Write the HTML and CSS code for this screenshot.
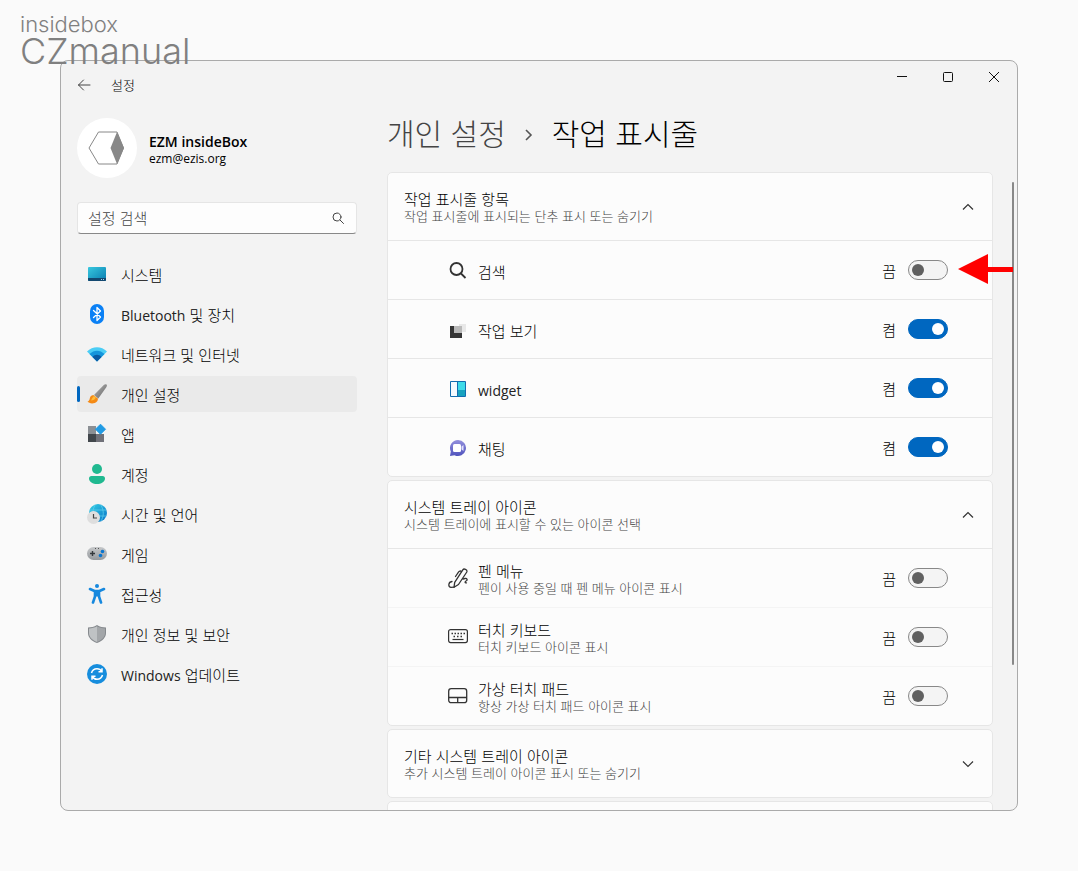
FILE: index.html
```html
<!DOCTYPE html>
<html lang="ko">
<head>
    <meta charset="UTF-8">
    <meta name="viewport" content="width=device-width, initial-scale=1.0">
    <title>설정 - 작업 표시줄</title>
    <link rel="stylesheet" href="styles.css">
</head>
<body>
    <div class="watermark">
        <span class="watermark-small">insidebox</span>
        <span class="watermark-large">CZmanual</span>
    </div>
    <div class="window">
        <header class="titlebar">
            <button class="back" aria-label="뒤로">
                <svg width="14" height="14" viewBox="0 0 14 14" fill="none" stroke="#444" stroke-linecap="round" stroke-linejoin="round"><path d="M13 7H1.5M6.5 2L1.5 7l5 5"/></svg>
            </button>
            <span class="app-title">설정</span>
            <div class="window-controls">
                <button aria-label="최소화"><svg width="12" height="12" viewBox="0 0 12 12" stroke="#111"><path d="M1 5.5h10"/></svg></button>
                <button aria-label="최대화"><svg width="12" height="12" viewBox="0 0 12 12" fill="none" stroke="#111"><rect x="1.5" y="1.5" width="9" height="9" rx="1"/></svg></button>
                <button aria-label="닫기"><svg width="12" height="12" viewBox="0 0 12 12" stroke="#111"><path d="M1 1l10 10M11 1L1 11"/></svg></button>
            </div>
        </header>
        <div class="body">
            <aside class="sidebar">
                <div class="profile">
                    <div class="avatar">
                        <svg width="38" height="34" viewBox="0 0 38 34"><path d="M10.500 1H29l6.500 16L29 33H10.500L1 17z" fill="none" stroke="#888"/><path d="M29 1l7 16-7 16-6.500-16z" fill="#888"/></svg>
                    </div>
                    <div class="profile-text">
                        <div class="profile-name">EZM insideBox</div>
                        <div class="profile-mail">ezm@ezis.org</div>
                    </div>
                </div>
                <div class="search">
                    <input type="text" id="search" aria-label="설정 검색" placeholder="설정 검색">
                    <svg width="12" height="12" viewBox="0 0 12 12" fill="none" stroke="#444" stroke-linecap="round"><circle cx="5" cy="5" r="4"/><path d="M8 8l3.500 3.500"/></svg>
                </div>
                <nav>
                    <a href="#system">
                        <svg width="20" height="20" viewBox="0 0 20 20"><defs><linearGradient id="sys" x2="1" y2="1"><stop stop-color="#38c8df"/><stop offset="1" stop-color="#087cb0"/></linearGradient></defs><rect x="1" y="3" width="18" height="14" rx="1" fill="url(#sys)"/><path d="M1 14h18v2a1 1 0 0 1-1 1H2a1 1 0 0 1-1-1z" fill="#134870"/><path d="M14 15.500h1M16 15.500h1" stroke="#9fd8f0"/></svg>
                        <span class="nav-label">시스템</span>
                    </a>
                    <a href="#bluetooth">
                        <svg width="20" height="20" viewBox="0 0 20 20"><rect x="3" width="14" height="20" rx="7" fill="#0a80f5"/><path d="M6.500 6.500l7 6.500-3.500 3.500V3.500L13.500 7l-7 6.500" fill="none" stroke="#fff" stroke-width="1.300" stroke-linejoin="round" stroke-linecap="round"/></svg>
                        <span class="nav-label"><span class="latin">Bluetooth</span> 및 장치</span>
                    </a>
                    <a href="#network">
                        <svg width="20" height="20" viewBox="0 0 20 20"><path d="M0 7.500C5.500 1.800 14.500 1.800 20 7.500L10 17.500z" fill="#4bcdf5"/><path d="M2.500 10C7 5.500 13 5.500 17.500 10L10 17.500z" fill="#1595dc"/><path d="M5.500 13C8 10 12 10 14.500 13L10 17.500z" fill="#0a5ba4"/></svg>
                        <span class="nav-label">네트워크 및 인터넷</span>
                    </a>
                    <a href="#personalization" class="active">
                        <svg width="20" height="20" viewBox="0 0 20 20"><defs><linearGradient id="brush" x2="1" y2="1"><stop stop-color="#b5b5b5"/><stop offset="1" stop-color="#666"/></linearGradient></defs><path d="M19.500.5c.7.7.5 1.800-.2 2.800l-8 11.200L7 11 16.800 1C17.700.1 18.900-.1 19.500.5z" fill="url(#brush)"/><path d="M6.300 11c-2.500.2-3.300 1.800-3.600 3.800-.2 1.500-1 2.500-2.200 2.800 1.300 1.700 4.700 2.300 7.200 1.300 2.200-.8 3.400-2.600 3.200-4.500z" fill="#f58a15"/><path d="M7 12c-1.500 1-2 3-3 4.500 2 0 4.500-1 4.800-3.300z" fill="#ffbd38"/></svg>
                        <span class="nav-label">개인 설정</span>
                    </a>
                    <a href="#apps">
                        <svg width="20" height="20" viewBox="0 0 20 20"><path d="M1 2h8v8H1z" fill="#8b8f94"/><path d="M1 10h8v8H1z" fill="#42474c"/><path d="M9 10h8v8H9z" fill="#707179"/><path d="M13.500.2l5 5-5 5-5-5z" fill="#219be4" stroke="#219be4" stroke-linejoin="round"/></svg>
                        <span class="nav-label">앱</span>
                    </a>
                    <a href="#accounts">
                        <svg width="20" height="20" viewBox="0 0 20 20" fill="#20b990"><circle cx="10" cy="5" r="5"/><path d="M4.500 12h11A2.500 2.500 0 0 1 18 14.500C18 18 14 20 10 20s-8-2-8-5.500A2.500 2.500 0 0 1 4.500 12z"/></svg>
                        <span class="nav-label">계정</span>
                    </a>
                    <a href="#time">
                        <svg width="20" height="20" viewBox="0 0 20 20"><defs><linearGradient id="globe" x2="1" y2="1"><stop stop-color="#35d0e4"/><stop offset="1" stop-color="#0873c8"/></linearGradient></defs><circle cx="11" cy="9" r="9" fill="url(#globe)"/><path d="M3 6h16M3 12h16M8 1c-3 6-3 11 0 16M14 1c3 6 3 11 0 16" fill="none" stroke="#63d2ef" stroke-width=".7"/><circle cx="6.500" cy="13.500" r="6.500" fill="#dedede"/><path d="M6.500 10v4h3.500" fill="none" stroke="#444" stroke-width="1.200"/></svg>
                        <span class="nav-label">시간 및 언어</span>
                    </a>
                    <a href="#gaming">
                        <svg width="20" height="20" viewBox="0 0 20 20"><defs><linearGradient id="pad" x2="0" y2="1"><stop stop-color="#c6c8ca"/><stop offset="1" stop-color="#95999d"/></linearGradient></defs><rect y="3" width="20" height="13" rx="6.500" fill="url(#pad)"/><path d="M5.500 7v5M3 9.500h5" stroke="#35393d" stroke-width="1.400"/><path d="M8 4.500h1M11 4.500h1" stroke="#555"/><circle cx="15.500" cy="7.500" r="1.800" fill="#0875d0"/><circle cx="13.500" cy="11.500" r="1.800" fill="#0875d0"/></svg>
                        <span class="nav-label">게임</span>
                    </a>
                    <a href="#accessibility">
                        <svg width="20" height="20" viewBox="0 0 20 20" fill="none" stroke="#1688de" stroke-width="2.600" stroke-linecap="round" stroke-linejoin="round"><circle cx="10" cy="2" r="2" fill="#1688de" stroke="none"/><path d="M3 5l4.500 2h5L17 5M8 7.500v5l-2 6M12 7.500v5l2 6"/><path d="M8 6.500h4v6H8z" fill="#1688de" stroke="none"/></svg>
                        <span class="nav-label">접근성</span>
                    </a>
                    <a href="#privacy">
                        <svg width="20" height="20" viewBox="0 0 20 20"><path d="M10 1c3 1.800 5.800 2.500 9 2.500V9c0 4.500-3.500 8-9 10C4.500 17 1 13.500 1 9V3.500C4.200 3.500 7 2.800 10 1z" fill="#85898d"/><path d="M10 2.200c2.600 1.500 5 2.100 8 2.200V9c0 4-3 7-8 8.900z" fill="#a3a6a9"/><path d="M10 2.200C7.400 3.700 5 4.300 2 4.400V9c0 4 3 7 8 8.900z" fill="#bfc2c4"/></svg>
                        <span class="nav-label">개인 정보 및 보안</span>
                    </a>
                    <a href="#update">
                        <svg width="20" height="20" viewBox="0 0 20 20"><circle cx="10" cy="10" r="10" fill="#168ddd"/><path d="M4.500 9C5.300 6 7.500 4.800 10 4.800c2 0 3.700.8 4.800 2.700M15 4.300v3.500h-3.500M15.500 11c-.8 3-3 4.200-5.500 4.200-2 0-3.700-.8-4.800-2.700M5 15.700v-3.500h3.500" fill="none" stroke="#fff" stroke-width="1.500"/></svg>
                        <span class="nav-label"><span class="latin">Windows</span> 업데이트</span>
                    </a>
                </nav>
            </aside>
            <main>
                <h1>
                    <a href="#personalization">개인 설정</a>
                    <svg width="10" height="14" viewBox="0 0 10 14" fill="none" stroke="#555" stroke-width="1.600"><path d="M2 2l5 5-5 5"/></svg>
                    <span>작업 표시줄</span>
                </h1>
                <div class="cards">
                    <section class="card">
                        <button class="card-header" aria-expanded="true">
                            <span class="text"><span class="title">작업 표시줄 항목</span><span class="desc">작업 표시줄에 표시되는 단추 표시 또는 숨기기</span></span>
                            <svg width="12" height="12" viewBox="0 0 12 12" fill="none" stroke="#333" stroke-width="1.200"><path d="M1 8.500l5-5 5 5"/></svg>
                        </button>
                        <div class="row">
                            <svg width="20" height="20" viewBox="0 0 20 20" fill="none" stroke="#333" stroke-width="1.800"><circle cx="8.500" cy="9" r="6"/><path d="M13 13.500l4.500 4.500"/></svg>
                            <label class="text" for="t-search"><span class="title">검색</span></label>
                            <span class="state">끔</span>
                            <input type="checkbox" role="switch" id="t-search">
                            <svg class="pointer" width="55" height="30" viewBox="0 0 55 30" fill="#f00"><path d="M0 15L30 0v13h25v5H30v12z"/></svg>
                        </div>
                        <div class="row">
                            <svg width="20" height="20" viewBox="0 0 20 20"><path d="M11 5h7v8h-7z" fill="#e8e8e8"/><path d="M2 7h12v12H2z" fill="#353535"/><path d="M6 7h8v7H6z" fill="#b9b9b9"/></svg>
                            <label class="text" for="t-view"><span class="title">작업 보기</span></label>
                            <span class="state">켬</span>
                            <input type="checkbox" role="switch" id="t-view" checked>
                        </div>
                        <div class="row">
                            <svg width="20" height="20" viewBox="0 0 20 20"><rect x="2" y="3" width="16" height="16" rx="1" fill="#126db0"/><path d="M3 4h6v14H3z" fill="#f4faff"/><path d="M10 4h7v8h-7z" fill="#3edbe9"/><path d="M10 12h7v6h-7z" fill="#18a2bf"/></svg>
                            <label class="text" for="t-widget"><span class="title latin">widget</span></label>
                            <span class="state">켬</span>
                            <input type="checkbox" role="switch" id="t-widget" checked>
                        </div>
                        <div class="row">
                            <svg width="20" height="20" viewBox="0 0 20 20"><defs><linearGradient id="chat" x2="0" y2="1"><stop stop-color="#9390dd"/><stop offset="1" stop-color="#5053bd"/></linearGradient></defs><path d="M10 3a8 8 0 1 1-3.500 15.200L2 19l.8-4.500A8 8 0 0 1 10 3z" fill="url(#chat)"/><rect x="5" y="7" width="8" height="8" rx="1.500" fill="#fff"/><path d="M13.500 9.500L15.500 8v6l-2-1.500z" fill="#e4e3fa"/></svg>
                            <label class="text" for="t-chat"><span class="title">채팅</span></label>
                            <span class="state">켬</span>
                            <input type="checkbox" role="switch" id="t-chat" checked>
                        </div>
                    </section>
                    <section class="card tray">
                        <button class="card-header" aria-expanded="true">
                            <span class="text"><span class="title">시스템 트레이 아이콘</span><span class="desc">시스템 트레이에 표시할 수 있는 아이콘 선택</span></span>
                            <svg width="12" height="12" viewBox="0 0 12 12" fill="none" stroke="#333" stroke-width="1.200"><path d="M1 8.500l5-5 5 5"/></svg>
                        </button>
                        <div class="row">
                            <svg width="20" height="20" viewBox="0 0 20 20" fill="none" stroke="#333" stroke-width="1.300" stroke-linecap="round" stroke-linejoin="round"><path d="M6 19.300l.7-5L14.800 1.800c1-1.500 4.900-.6 4 2.200L10.500 16.500z"/><path d="M13.500 3.500c-1-.9-2.300-.5-3.200.8L7.500 8.500"/><path d="M4 13.500c-4 .5-4 5.500-1 5.800l3-.2M15 11l2-.5c2-.5 3 1.500 1 2.500-1 .5-1.500 2 .5 1.800"/></svg>
                            <label class="text" for="t-pen"><span class="title">펜 메뉴</span><span class="desc">펜이 사용 중일 때 펜 메뉴 아이콘 표시</span></label>
                            <span class="state">끔</span>
                            <input type="checkbox" role="switch" id="t-pen">
                        </div>
                        <div class="row">
                            <svg width="20" height="20" viewBox="0 0 20 20" fill="none" stroke="#333" stroke-width="1.200"><rect x=".6" y="2.600" width="18.800" height="13" rx="2"/><path d="M3.500 6.500h1.500M6.500 6.500H8M9.500 6.500H11M12.500 6.500H14M15.500 6.500H17M5.500 9.500H7M9 9.500h1.500M12.500 9.500H14" stroke-width="1.500"/><path d="M4.500 12.500h11"/></svg>
                            <label class="text" for="t-keyboard"><span class="title">터치 키보드</span><span class="desc">터치 키보드 아이콘 표시</span></label>
                            <span class="state">끔</span>
                            <input type="checkbox" role="switch" id="t-keyboard">
                        </div>
                        <div class="row">
                            <svg width="20" height="20" viewBox="0 0 20 20" fill="none" stroke="#333" stroke-width="1.300"><rect x=".7" y="2.700" width="18" height="14" rx="2.500"/><path d="M.7 11.500h18M9.700 11.500v5"/></svg>
                            <label class="text" for="t-pad"><span class="title">가상 터치 패드</span><span class="desc">항상 가상 터치 패드 아이콘 표시</span></label>
                            <span class="state">끔</span>
                            <input type="checkbox" role="switch" id="t-pad">
                        </div>
                    </section>
                    <section class="card">
                        <button class="card-header" aria-expanded="false">
                            <span class="text"><span class="title">기타 시스템 트레이 아이콘</span><span class="desc">추가 시스템 트레이 아이콘 표시 또는 숨기기</span></span>
                            <svg width="12" height="12" viewBox="0 0 12 12" fill="none" stroke="#333" stroke-width="1.200"><path d="M1 3.500l5 5 5-5"/></svg>
                        </button>
                    </section>
                    <section class="card">
                        <button class="card-header" aria-expanded="false" aria-label="작업 표시줄 동작"></button>
                    </section>
                </div>
                <div class="scroll-thumb"></div>
            </main>
        </div>
    </div>
</body>
</html>
```
FILE: styles.css
```css
* {
    box-sizing: border-box;
}
body {
    margin: 0;
    height: 100vh;
    padding: 60px;
    background-color: #fafafa;
    color: #000;
    font-family: "Liberation Sans", "Noto Sans CJK KR", sans-serif;
    font-size: 15px;
    font-weight: 300;
    line-height: 20px;
    overflow: hidden;
}
button {
    padding: 0;
    border: none;
    background: none;
    color: inherit;
    font: inherit;
    text-align: left;
}
svg {
    display: block;
    flex: none;
}
a {
    color: inherit;
    text-decoration: none;
}
.latin {
    color: #222;
    font-family: "Open Sans", sans-serif;
    font-size: 14px;
    font-weight: 400;
}
.watermark {
    position: absolute;
    top: 12px;
    left: 20px;
    z-index: 1;
    color: #808080;
    font-family: Inter, sans-serif;
    font-weight: 300;
}
.watermark span {
    display: block;
}
.watermark-small {
    font-size: 22px;
    line-height: 24px;
}
.watermark-large {
    font-size: 36px;
    line-height: 30px;
}
.window {
    height: 100%;
    display: flex;
    flex-direction: column;
    background-color: #f3f3f3;
    border: 1px solid #aaa;
    border-radius: 8px;
    overflow: hidden;
}
.titlebar {
    height: 48px;
    flex: none;
    display: flex;
    align-items: center;
    padding-left: 16px;
}
.back {
    width: 34px;
}
.app-title {
    padding-top: 2px;
    font-size: 13px;
}
.window-controls {
    display: flex;
    align-self: flex-start;
    margin-left: auto;
}
.window-controls button {
    width: 46px;
    height: 32px;
    display: flex;
    align-items: center;
    justify-content: center;
}
.body {
    flex: 1;
    min-height: 0;
    display: flex;
    gap: 30px;
    padding-left: 16px;
}
.sidebar {
    width: 280px;
    flex: none;
    padding-top: 9px;
}
.profile {
    display: flex;
    align-items: center;
    gap: 12px;
}
.avatar {
    width: 60px;
    height: 60px;
    display: flex;
    align-items: center;
    justify-content: center;
    background-color: #fff;
    border-radius: 50%;
}
.profile-text {
    padding-top: 4px;
    font-family: "Open Sans", sans-serif;
    line-height: 17px;
}
.profile-name {
    font-size: 14px;
    font-weight: 600;
}
.profile-mail {
    font-size: 12px;
    font-weight: 400;
}
.search {
    position: relative;
    margin: 24px 0 22px;
}
.search input {
    display: block;
    width: 100%;
    height: 32px;
    padding: 0 40px 0 10px;
    border: 1px solid #e5e5e5;
    border-bottom-color: #888;
    border-radius: 4px;
    background-color: #fdfdfd;
    font: inherit;
}
.search input::placeholder {
    color: #444;
}
.search svg {
    position: absolute;
    top: 10px;
    right: 13px;
}
nav {
    display: flex;
    flex-direction: column;
    gap: 4px;
}
nav a {
    position: relative;
    height: 36px;
    display: flex;
    align-items: center;
    gap: 14px;
    padding-left: 10px;
    border-radius: 4px;
}
nav a.active {
    background-color: #eaeaea;
}
nav a.active::before {
    content: "";
    position: absolute;
    top: 10px;
    left: 0;
    width: 3px;
    height: 16px;
    border-radius: 2px;
    background-color: #0067c0;
}
.nav-label {
    padding-top: 4px;
}
main {
    position: relative;
    flex: 1;
    min-width: 0;
    padding-right: 24px;
}
h1 {
    display: flex;
    align-items: center;
    gap: 18px;
    height: 52px;
    margin: 0 0 11px;
    font-size: 30px;
    font-weight: 300;
    line-height: 54px;
}
h1 a {
    color: #444;
}
.cards {
    display: flex;
    flex-direction: column;
    gap: 3px;
}
.card {
    background-color: #fcfcfc;
    border: 1px solid #e6e6e6;
    border-radius: 5px;
}
.card-header {
    width: 100%;
    height: 67px;
    display: flex;
    align-items: center;
    justify-content: space-between;
    padding: 0 18px 0 16px;
}
.text {
    display: flex;
    flex-direction: column;
    padding-top: 2px;
}
.title {
    line-height: 17px;
}
.desc {
    color: #444;
    font-size: 13px;
    line-height: 17px;
}
.row {
    position: relative;
    height: 59px;
    display: flex;
    align-items: center;
    padding: 0 44px 0 60px;
    border-top: 1px solid #e6e6e6;
}
.tray .row + .row {
    border-top-color: #f4f4f4;
}
.row .text {
    flex: 1;
    margin-left: 10px;
    padding-top: 4px;
}
.state {
    margin-right: 12px;
    padding-top: 4px;
}
input[role="switch"] {
    appearance: none;
    width: 40px;
    height: 20px;
    margin: 0;
    padding: 3px;
    border: 1px solid #888;
    border-radius: 10px;
    background-color: #f4f4f4;
}
input[role="switch"]::before {
    content: "";
    display: block;
    width: 12px;
    height: 12px;
    border-radius: 50%;
    background-color: #606060;
}
input[role="switch"]:checked {
    border-color: #0067c0;
    background-color: #0067c0;
}
input[role="switch"]:checked::before {
    margin-left: auto;
    background-color: #fff;
}
.pointer {
    position: absolute;
    top: 13px;
    left: calc(100% - 34px);
    z-index: 1;
}
.scroll-thumb {
    position: absolute;
    top: 73px;
    right: 3px;
    width: 2px;
    height: 483px;
    border-radius: 1px;
    background-color: #888;
}
```
